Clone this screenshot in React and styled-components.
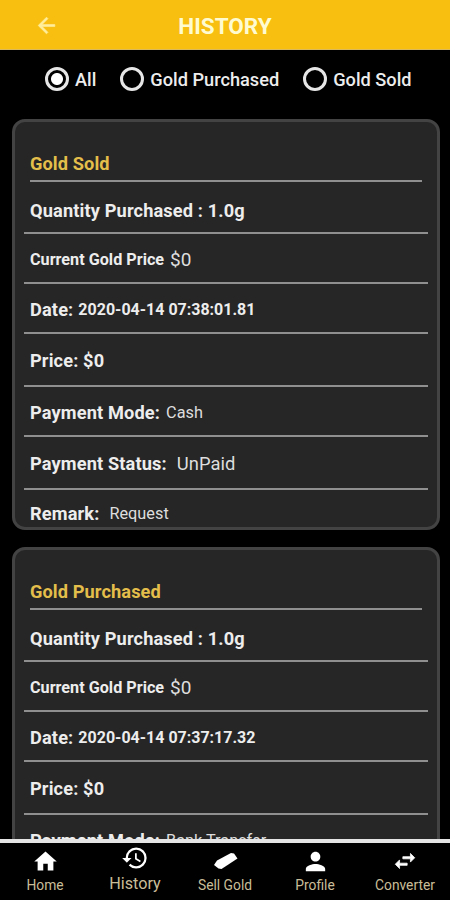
import React from "react";
import styled, { createGlobalStyle } from "styled-components";
import {
	MdArrowBack,
	MdHome,
	MdHistory,
	MdPerson,
	MdSwapHoriz,
} from "react-icons/md";

const filters = ["All", "Gold Purchased", "Gold Sold"];

const history = [
	{
		title: "Gold Sold",
		quantity: "1.0g",
		date: "2020-04-14 07:38:01.81",
		mode: "Cash",
		status: "UnPaid",
		remark: "Request",
	},
	{
		title: "Gold Purchased",
		quantity: "1.0g",
		date: "2020-04-14 07:37:17.32",
		mode: "Bank Transfer",
	},
];

const GoldBar = () => (
	<svg width="27" height="22" viewBox="0 0 27 22">
		<path
			d="M2 15 5 10.500 19 3 22 3.500 25.500 8.500 9.500 19 6.500 18.500z"
			fill="#fff"
		/>
	</svg>
);

const HistoryCard = ({ item }) => (
	<Card>
		<CardTitle>{item.title}</CardTitle>
		<Row $height={52} $top={6}>
			<Label>Quantity Purchased : {item.quantity}</Label>
		</Row>
		<Row $height={50}>
			<Label $small>Current Gold Price</Label>
			<Value $size={19} $gap={6}>$0</Value>
		</Row>
		<Row $height={50}>
			<Label>Date:</Label>
			<Value $size={16} $gap={5} $bold>{item.date}</Value>
		</Row>
		<Row $height={53}>
			<Label>Price: $0</Label>
		</Row>
		<Row $height={50}>
			<Label>Payment Mode:</Label>
			<Value $size={16.3} $gap={6}>{item.mode}</Value>
		</Row>
		{item.status && (
			<Row $height={53}>
				<Label>Payment Status:</Label>
				<Value $size={18.4} $gap={10}>{item.status}</Value>
			</Row>
		)}
		{item.remark && (
			<Row $height={45} $last>
				<Label>Remark:</Label>
				<Value $size={16.3} $gap={10}>{item.remark}</Value>
			</Row>
		)}
	</Card>
);

const App = () => {
	return (
		<Screen>
			<GlobalStyle />
			<Header>
				<BackButton>
					<MdArrowBack />
				</BackButton>
				<Title>HISTORY</Title>
			</Header>

			<Filters>
				{filters.map((name, i) => (
					<Option key={name}>
						<Radio $checked={i === 0} />
						{name}
					</Option>
				))}
			</Filters>

			<List>
				{history.map((item) => (
					<HistoryCard key={item.title} item={item} />
				))}
			</List>

			<TabBar>
				<Tab>
					<TabIcon><MdHome size={27} /></TabIcon>
					<TabText>Home</TabText>
				</Tab>
				<Tab $active>
					<TabIcon><MdHistory size={28} /></TabIcon>
					<TabText $active>History</TabText>
				</Tab>
				<Tab>
					<TabIcon><GoldBar /></TabIcon>
					<TabText>Sell Gold</TabText>
				</Tab>
				<Tab>
					<TabIcon><MdPerson size={29} /></TabIcon>
					<TabText>Profile</TabText>
				</Tab>
				<Tab>
					<TabIcon $bold><MdSwapHoriz size={26} /></TabIcon>
					<TabText>Converter</TabText>
				</Tab>
			</TabBar>
		</Screen>
	);
};

export default App;

const GlobalStyle = createGlobalStyle`
	* {
		box-sizing: border-box;
	}
	body {
		margin: 0;
		background: #000;
		font-family: Roboto, sans-serif;
	}
`;

const Screen = styled.div`
	display: flex;
	flex-direction: column;
	height: 900px;
	overflow: hidden;
	background: #000;
	color: #ededed;
`;

const Header = styled.header`
	display: grid;
	grid-template-columns: 92px 1fr 92px;
	align-items: center;
	flex: none;
	height: 50px;
	padding-top: 2px;
	background: #f8be10;
	border-bottom: 1px solid #dcb95a;
`;

const BackButton = styled.button`
	display: flex;
	justify-content: center;
	padding: 0 0 1px;
	border: 0;
	background: none;
	color: #ffee9c;
	font-size: 25px;

	svg {
		stroke-width: 0;
	}
	path:last-child {
		stroke: #ffee9c;
		stroke-width: 0.6;
	}
`;

const Title = styled.h1`
	margin: 0;
	text-align: center;
	font-size: 22.5px;
	font-weight: 700;
	color: #fffbd0;
`;

const Filters = styled.div`
	display: flex;
	flex: none;
	gap: 24px;
	height: 69px;
	padding: 17px 0 0 45px;
`;

const Option = styled.label`
	display: flex;
	align-items: center;
	gap: 6px;
	height: 24px;
	font-size: 18.2px;
	font-weight: 500;
	white-space: nowrap;
`;

const Radio = styled.span`
	width: 24px;
	height: 24px;
	border: 3px solid #e6e6e6;
	border-radius: 50%;
	background: ${(props) =>
		props.$checked ? "radial-gradient(circle, #fff 5.5px, #000 6.5px)" : "none"};
`;

const List = styled.main`
	flex: 1;
	min-height: 0;
	overflow: hidden;
	padding: 0 10px 0 12px;
`;

const Card = styled.section`
	height: 411px;
	margin-bottom: 17px;
	overflow: hidden;
	padding: 0 9px;
	border: 3px solid #434343;
	border-radius: 13px;
	background: #262626;
`;

const CardTitle = styled.h2`
	display: flex;
	align-items: flex-end;
	height: 60px;
	margin: 0 6px;
	padding-bottom: 6px;
	border-bottom: 2px solid #8f8f8f;
	font-size: 18.2px;
	font-weight: 700;
	line-height: 20px;
	letter-spacing: 0.1px;
	color: #e4be4a;
`;

const Row = styled.div`
	display: flex;
	align-items: center;
	height: ${(props) => props.$height}px;
	padding: ${(props) => props.$top || 2}px 0 0 6px;
	border-bottom: ${(props) => (props.$last ? 0 : 2)}px solid #8f8f8f;
	white-space: nowrap;
`;

const Label = styled.span`
	font-size: ${(props) => (props.$small ? 16.2 : 18.2)}px;
	font-weight: 700;
	letter-spacing: ${(props) => (props.$small ? 0 : 0.14)}px;
`;

const Value = styled.span`
	margin-left: ${(props) => props.$gap}px;
	font-size: ${(props) => props.$size}px;
	font-weight: ${(props) => (props.$bold ? 700 : 400)};
	color: ${(props) => (props.$bold ? "#ededed" : "#dedede")};
`;

const TabBar = styled.nav`
	display: grid;
	grid-template-columns: repeat(5, 1fr);
	flex: none;
	height: 61px;
	border-top: 4px solid #e4e4e4;
`;

const Tab = styled.div`
	display: flex;
	flex-direction: column;
	align-items: center;
	gap: ${(props) => (props.$active ? 4 : 3)}px;
	padding-top: ${(props) => (props.$active ? 2 : 5)}px;
	color: #fff;
`;

const TabIcon = styled.span`
	display: flex;
	align-items: center;
	justify-content: center;
	height: 26px;

	svg {
		flex: none;
		stroke-width: 0;
	}
	path:last-child {
		stroke: #fff;
		stroke-width: ${(props) => (props.$bold ? 0.7 : 0)};
	}
`;

const TabText = styled.span`
	font-size: ${(props) => (props.$active ? 16.2 : 13.8)}px;
	line-height: ${(props) => (props.$active ? 18 : 16)}px;
	color: #c9bd98;
	white-space: nowrap;
`;
